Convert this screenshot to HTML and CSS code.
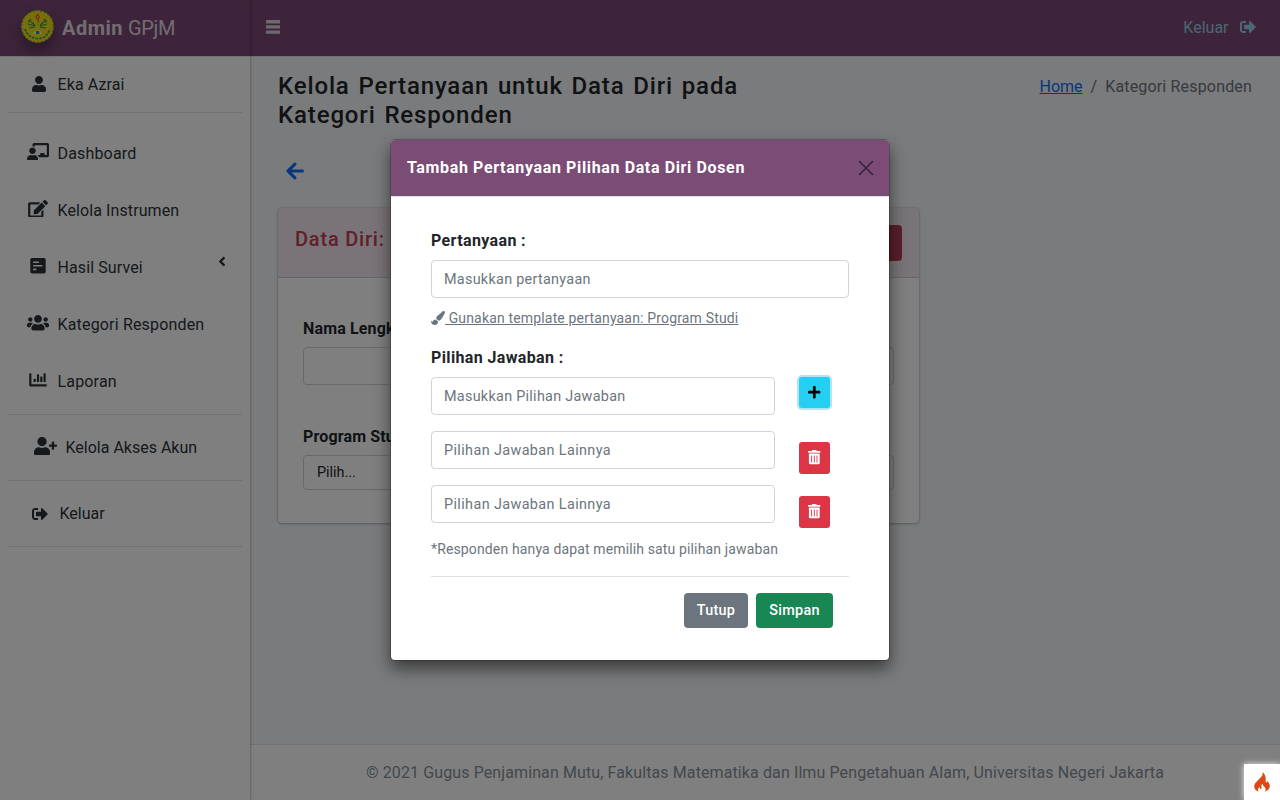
FILE: index.html
```html
<!DOCTYPE html>
<html lang="id">
<head>
<meta charset="utf-8">
<title>Admin GPjM</title>
<link rel="stylesheet" href="styles.css">
</head>
<body>
<svg class="defs" width="0" height="0">
  <symbol id="user" viewBox="0 0 448 512"><path d="M224 256c70.7 0 128-57.3 128-128S294.7 0 224 0 96 57.3 96 128s57.3 128 128 128zm89.6 32h-16.7c-22.2 10.2-46.9 16-72.9 16s-50.6-5.8-72.9-16h-16.7C60.2 288 0 348.2 0 422.4V464c0 26.5 21.5 48 48 48h352c26.5 0 48-21.5 48-48v-41.6c0-74.2-60.2-134.4-134.4-134.4z"/></symbol>
  <symbol id="teacher" viewBox="0 0 640 512"><path d="M208 352c-2.39 0-4.78.35-7.06 1.09C187.98 357.3 174.35 360 160 360c-14.35 0-27.98-2.7-40.95-6.91-2.28-.74-4.66-1.09-7.05-1.09C49.94 352-.33 402.48 0 464.62.14 490.88 21.73 512 48 512h224c26.27 0 47.86-21.12 48-47.38.33-62.14-49.94-112.62-112-112.62zm-48-32c53.02 0 96-42.98 96-96s-42.98-96-96-96-96 42.98-96 96 42.98 96 96 96zM592 0H208c-26.47 0-48 22.25-48 49.59V96c23.42 0 45.1 6.78 64 17.8V64h352v288h-64v-64H384v64h-76.24c19.1 16.69 33.12 38.73 39.69 64H592c26.47 0 48-22.25 48-49.59V49.59C640 22.25 618.47 0 592 0z"/></symbol>
  <symbol id="edit" viewBox="0 0 576 512"><path d="M402.6 83.2l90.2 90.2c3.8 3.8 3.8 10 0 13.8L274.4 405.6l-92.8 10.3c-12.4 1.4-22.9-9.1-21.5-21.5l10.3-92.8L388.8 83.2c3.8-3.8 10-3.8 13.8 0zm162-22.9l-48.8-48.8c-15.2-15.2-39.9-15.2-55.2 0l-35.4 35.4c-3.8 3.8-3.8 10 0 13.8l90.2 90.2c3.8 3.8 10 3.8 13.8 0l35.4-35.4c15.2-15.3 15.2-40 0-55.2zM384 346.2V448H64V128h229.8c3.2 0 6.2-1.3 8.5-3.5l40-40c7.6-7.6 2.2-20.5-8.5-20.5H48C21.5 64 0 85.5 0 112v352c0 26.5 21.5 48 48 48h352c26.5 0 48-21.5 48-48V306.2c0-10.7-12.9-16-20.5-8.5l-40 40c-2.2 2.3-3.5 5.3-3.5 8.5z"/></symbol>
  <symbol id="poll" viewBox="0 0 448 512"><path fill-rule="evenodd" d="M48 32h352a48 48 0 0 1 48 48v352a48 48 0 0 1-48 48H48a48 48 0 0 1-48-48V80a48 48 0 0 1 48-48zM96 128h144a16 16 0 0 1 16 16v16a16 16 0 0 1-16 16H96a16 16 0 0 1-16-16v-16a16 16 0 0 1 16-16zM96 232h240a16 16 0 0 1 16 16v16a16 16 0 0 1-16 16H96a16 16 0 0 1-16-16v-16a16 16 0 0 1 16-16zM96 336h64a16 16 0 0 1 16 16v16a16 16 0 0 1-16 16H96a16 16 0 0 1-16-16v-16a16 16 0 0 1 16-16z"/></symbol>
  <symbol id="users" viewBox="0 0 640 512"><path d="M96 224c35.3 0 64-28.7 64-64s-28.7-64-64-64-64 28.7-64 64 28.7 64 64 64zm448 0c35.3 0 64-28.7 64-64s-28.7-64-64-64-64 28.7-64 64 28.7 64 64 64zm32 32h-64c-17.6 0-33.5 7.1-45.1 18.6 40.3 22.1 68.9 62 75.1 109.4h66c17.7 0 32-14.3 32-32v-32c0-35.3-28.7-64-64-64zm-256 0c61.9 0 112-50.1 112-112S381.9 32 320 32 208 82.1 208 144s50.1 112 112 112zm76.8 32h-8.3c-20.8 10-43.9 16-68.5 16s-47.6-6-68.5-16h-8.3C179.6 288 128 339.6 128 403.2V432c0 26.5 21.5 48 48 48h288c26.5 0 48-21.5 48-48v-28.8c0-63.6-51.6-115.2-115.2-115.2zm-223.7-13.4C161.5 263.1 145.6 256 128 256H64c-35.3 0-64 28.7-64 64v32c0 17.7 14.3 32 32 32h65.9c6.3-47.4 34.9-87.3 75.2-109.4z"/></symbol>
  <symbol id="chart" viewBox="0 0 512 512"><path d="M332.8 320h38.4c6.4 0 12.8-6.4 12.8-12.8V172.8c0-6.4-6.4-12.8-12.8-12.8h-38.4c-6.4 0-12.8 6.4-12.8 12.8v134.4c0 6.4 6.4 12.8 12.8 12.8zm96 0h38.4c6.4 0 12.8-6.4 12.8-12.8V76.8c0-6.4-6.4-12.8-12.8-12.8h-38.4c-6.4 0-12.8 6.4-12.8 12.8v230.4c0 6.4 6.4 12.8 12.8 12.8zm-288 0h38.4c6.4 0 12.8-6.4 12.8-12.8v-70.4c0-6.4-6.4-12.8-12.8-12.8h-38.4c-6.4 0-12.8 6.4-12.8 12.8v70.4c0 6.4 6.4 12.8 12.8 12.8zm96 0h38.4c6.4 0 12.8-6.4 12.8-12.8V108.8c0-6.4-6.4-12.8-12.8-12.8h-38.4c-6.4 0-12.8 6.4-12.8 12.8v198.4c0 6.4 6.4 12.8 12.8 12.8zM496 384H64V80c0-8.84-7.16-16-16-16H16C7.16 64 0 71.16 0 80v336c0 17.67 14.33 32 32 32h464c8.84 0 16-7.16 16-16v-32c0-8.84-7.16-16-16-16z"/></symbol>
  <symbol id="user-plus" viewBox="0 0 640 512"><path d="M624 208h-64v-64c0-8.8-7.2-16-16-16h-32c-8.8 0-16 7.2-16 16v64h-64c-8.8 0-16 7.2-16 16v32c0 8.8 7.2 16 16 16h64v64c0 8.8 7.2 16 16 16h32c8.8 0 16-7.2 16-16v-64h64c8.8 0 16-7.2 16-16v-32c0-8.8-7.2-16-16-16z"/><use href="#user" width="448" height="512"/></symbol>
  <symbol id="sign-out" viewBox="0 0 512 512"><path d="M497 273L329 441c-15 15-41 4.5-41-17v-96H152c-13.3 0-24-10.7-24-24v-96c0-13.3 10.7-24 24-24h136V88c0-21.4 25.9-32 41-17l168 168c9.3 9.4 9.3 24.6 0 34zM192 436v-40c0-6.6-5.4-12-12-12H96c-17.7 0-32-14.3-32-32V160c0-17.7 14.3-32 32-32h84c6.6 0 12-5.4 12-12V76c0-6.6-5.4-12-12-12H96c-53 0-96 43-96 96v192c0 53 43 96 96 96h84c6.6 0 12-5.4 12-12z"/></symbol>
  <symbol id="angle-left" viewBox="0 0 256 512"><path d="M31.7 239l136-136c9.4-9.4 24.6-9.4 33.9 0l22.6 22.6c9.4 9.4 9.4 24.6 0 33.9L127.9 256l96.4 96.4c9.4 9.4 9.4 24.6 0 33.9L201.7 409c-9.4 9.4-24.6 9.4-33.9 0l-136-136c-9.5-9.4-9.5-24.6-.1-34z"/></symbol>
  <symbol id="arrow-left" viewBox="0 0 448 512"><path d="M257.5 445.1l-22.2 22.2c-9.4 9.4-24.6 9.4-33.9 0L7 273c-9.4-9.4-9.4-24.6 0-33.9L201.4 44.7c9.4-9.4 24.6-9.4 33.9 0l22.2 22.2c9.5 9.5 9.3 25-.4 34.3L136.6 216H424c13.3 0 24 10.7 24 24v32c0 13.3-10.7 24-24 24H136.6l120.5 114.8c9.8 9.3 10 24.8.4 34.3z"/></symbol>
  <symbol id="bars" viewBox="0 0 14 14"><path d="M.4 0h13.200a.4.4 0 0 1 .4.4v2.600a.4.4 0 0 1-.4.4H.4A.4.4 0 0 1 0 3V.4A.4.4 0 0 1 .4 0zM.4 5.200h13.200a.4.4 0 0 1 .4.4v2.600a.4.4 0 0 1-.4.4H.4a.4.4 0 0 1-.4-.4V5.600a.4.4 0 0 1 .4-.4zM.4 10.400h13.200a.4.4 0 0 1 .4.4v2.600a.4.4 0 0 1-.4.4H.4a.4.4 0 0 1-.4-.4v-2.600a.4.4 0 0 1 .4-.4z"/></symbol>
  <symbol id="plus" viewBox="0 0 448 512"><path d="M416 208H272V64c0-17.700-14.300-32-32-32h-32c-17.700 0-32 14.300-32 32v144H32c-17.700 0-32 14.300-32 32v32c0 17.700 14.300 32 32 32h144v144c0 17.700 14.300 32 32 32h32c17.700 0 32-14.300 32-32V304h144c17.700 0 32-14.300 32-32v-32c0-17.700-14.300-32-32-32z"/></symbol>
  <symbol id="brush" viewBox="0 0 512 512"><path d="M167.020 309.340c-40.120 2.580-76.530 17.860-97.190 72.300-2.350 6.210-8 9.980-14.590 9.980-11.110 0-45.460-27.670-55.250-34.350C0 439.620 37.930 512 128 512c75.860 0 128-43.770 128-120.190 0-3.110-.65-6.080-.97-9.130l-88.010-73.340zM457.890 0c-15.160 0-29.370 6.710-40.210 16.450C213.270 199.050 192 203.340 192 257.090c0 13.700 3.250 26.760 8.730 38.700l63.820 53.180c7.210 1.800 14.640 3.030 22.390 3.030 62.110 0 98.110-45.470 211.160-256.460 7.380-14.350 13.900-29.850 13.900-45.990C512 20.640 486 0 457.890 0z"/></symbol>
  <symbol id="trash" viewBox="0 0 448 512"><path fill-rule="evenodd" d="M32 464a48 48 0 0 0 48 48h288a48 48 0 0 0 48-48V128H32zm272-256a16 16 0 0 1 32 0v224a16 16 0 0 1-32 0zm-96 0a16 16 0 0 1 32 0v224a16 16 0 0 1-32 0zm-96 0a16 16 0 0 1 32 0v224a16 16 0 0 1-32 0zM432 32H312l-9.400-18.700A24 24 0 0 0 281.100 0H166.800a23.720 23.720 0 0 0-21.400 13.300L136 32H16A16 16 0 0 0 0 48v32a16 16 0 0 0 16 16h416a16 16 0 0 0 16-16V48a16 16 0 0 0-16-16z"/></symbol>
</svg>

<div class="app">
  <aside class="sidebar">
    <div class="brand">
      <svg class="logo" viewBox="0 0 33 33">
        <circle cx="16.500" cy="16.500" r="16.300" fill="#f0dc18"/>
        <circle cx="16.500" cy="16.500" r="15.600" fill="none" stroke="#2f9a55" stroke-width="1" stroke-dasharray="1.600 2.200"/>
        <path d="M4 19c2 6 6 9 12.500 9.500S27 25 29 19" fill="none" stroke="#2f9a55" stroke-width="1.700" stroke-dasharray="2.500 1.200"/>
        <path d="M9 11l5 4M7 14l7 2M8 18l6-1M24 11l-5 4M26 14l-7 2M25 18l-6-1M10 9l-3 3M23 9l3 3" stroke="#2f9a55" stroke-width="1.200"/>
        <path d="M16.500 4l2 3-2 2 1.500 2-1.500 1.500M16.500 4l-1.500 3 1.500 2" fill="none" stroke="#e02f20" stroke-width="1"/>
        <path d="M12 24l2.500-3.500h4L21 24z" fill="#fff"/><path d="M14.800 21h3.600v3h-3.600z" fill="#2f9a55"/>
      </svg>
      <span class="brand-name"><b>Admin</b> <span class="thin">GPjM</span></span>
    </div>
    <div class="user-panel"><svg class="i14"><use href="#user"/></svg><span class="ls1">Eka Azrai</span></div>
    <nav class="menu">
      <a class="item"><svg class="i22"><use href="#teacher"/></svg><span class="ls2">Dashboard</span></a>
      <a class="item"><svg class="i22"><use href="#edit"/></svg><span class="ls1">Kelola Instrumen</span></a>
      <a class="item"><svg class="i22"><use href="#poll"/></svg><span class="ls1">Hasil Survei</span><svg class="caret"><use href="#angle-left"/></svg></a>
      <a class="item"><svg class="i22"><use href="#users"/></svg><span class="ls2">Kategori Responden</span></a>
      <a class="item"><svg class="i22"><use href="#chart"/></svg><span class="ls2">Laporan</span></a>
    </nav>
    <div class="block"><svg class="plus-ic"><use href="#user-plus"/></svg><span>Kelola Akses Akun</span></div>
    <div class="block out"><svg class="i16"><use href="#sign-out"/></svg><span>Keluar</span></div>
  </aside>

  <div class="main">
    <header class="navbar">
      <svg class="bars"><use href="#bars"/></svg>
      <a class="logout"><span>Keluar</span><svg class="i16"><use href="#sign-out"/></svg></a>
    </header>
    <main class="content">
      <div class="page-head">
        <h1>Kelola Pertanyaan untuk Data Diri pada<br>Kategori Responden</h1>
        <div class="crumbs"><a>Home</a><i>/</i><span class="ls2">Kategori Responden</span></div>
      </div>
      <svg class="back"><use href="#arrow-left"/></svg>
      <section class="card">
        <div class="card-head"><h2>Data Diri:</h2><span class="add"></span></div>
        <div class="card-body">
          <b class="label">Nama Lengkap</b>
          <div class="field"></div>
          <b class="label second">Program Studi</b>
          <div class="field select">Pilih...</div>
        </div>
      </section>
    </main>
    <footer class="footer">© 2021 Gugus Penjaminan Mutu, Fakultas Matematika dan Ilmu Pengetahuan Alam, Universitas Negeri Jakarta</footer>
  </div>
</div>

<div class="backdrop">
  <div class="modal">
    <div class="modal-head"><b>Tambah Pertanyaan Pilihan Data Diri Dosen</b>
      <svg class="close" viewBox="0 0 16 16"><path d="M1.500 1.500l13 13M14.500 1.500l-13 13" stroke="#000" stroke-width="1.500" stroke-linecap="round"/></svg></div>
    <div class="modal-body">
      <b class="label">Pertanyaan :</b>
      <div class="input">Masukkan pertanyaan</div>
      <div class="template"><svg class="brush"><use href="#brush"/></svg><u>&nbsp;Gunakan template pertanyaan: Program Studi</u></div>
      <b class="label">Pilihan Jawaban :</b>
      <div class="option"><div class="input">Masukkan Pilihan Jawaban</div><span class="sq plus"><svg><use href="#plus"/></svg></span></div>
      <div class="option"><div class="input other">Pilihan Jawaban Lainnya</div><span class="sq del"><svg><use href="#trash"/></svg></span></div>
      <div class="option"><div class="input other">Pilihan Jawaban Lainnya</div><span class="sq del"><svg><use href="#trash"/></svg></span></div>
      <div class="note">*Responden hanya dapat memilih satu pilihan jawaban</div>
      <div class="actions"><span class="btn gray">Tutup</span><span class="btn green">Simpan</span></div>
    </div>
  </div>
</div>

<div class="debug"><svg viewBox="0 0 16 20"><path d="M8.500 0c.8 3-1 4.600-3 6.800C3.200 9.200.2 11.500.2 14.500c0 2.500 1.800 4.300 4.500 5.200-1.200-1.500-.8-3.600.8-4.800 0 1.200.5 1.800 1.200 1.800.9 0 1.100-.9.8-1.800-.5-1.500.1-2.500 1.200-3.200-.2 2.600 3.300 3.200 3 5.800-.1 1-.6 1.700-1.200 2.200 2.900-.7 5.300-2.600 5.300-5.600 0-2.400-1.300-3.700-2.500-5.200-.1 1-.7 1.600-1.400 1.600C11.200 7.600 12.800 3.600 8.500 0z" fill="#dd4814"/></svg></div>
</body>
</html>
```
FILE: styles.css
```css
* { box-sizing: border-box; }
body { margin: 0; font: 16px/24px Roboto, "Open Sans", sans-serif; color: #212529; }
svg { fill: currentColor; display: block; flex: none; }
.defs { position: absolute; }
.ls1 { letter-spacing: .1px; }
.ls2 { letter-spacing: .17px; }

.app { display: flex; width: 1280px; height: 800px; overflow: hidden; }
.sidebar { width: 250px; flex: none; background: #fff; color: #2c3238; position: relative; z-index: 1; box-shadow: 0 0 3px rgba(0,0,0,.4); }
.brand { height: 57px; background: #7a4874; border-bottom: 1px solid #dee2e6; display: flex; align-items: center; padding-left: 21px; }
.logo { width: 33px; height: 33px; margin: -3px 8px 0 0; border-radius: 50%; box-shadow: 0 7px 14px rgba(0,0,0,.35); }
.brand-name { font-size: 20px; color: #e3dbe2; display: flex; gap: 5px; }
.brand-name b { font-weight: 700; letter-spacing: .5px; }
.thin { font-weight: 400; letter-spacing: -.35px; }
.user-panel { margin: 0 8px; height: 56px; border-bottom: 1px solid #dee2e6; display: flex; align-items: center; padding-left: 24px; gap: 11.500px; }
.user-panel svg { margin-top: -1px; }
.i14 { width: 14px; height: 16px; }
.i16 { width: 16px; height: 16px; }
.i22 { width: 22px; height: 17.600px; margin-top: -4px; }
.menu { margin: 12px 8px 4px; }
.item { display: flex; align-items: center; height: 57px; padding: 0 16px 0 19px; gap: 8.500px; }
.caret { width: 8px; height: 15px; margin: -12px 0 0 auto; }
.block { margin: 0 8px; height: 66px; border-top: 1px solid #dee2e6; display: flex; align-items: center; padding-left: 25.500px; gap: 10px; }
.plus-ic { width: 23px; height: 18.400px; margin: -3px -1px 0 0; }
.out { border-bottom: 1px solid #dee2e6; height: 67px; padding-left: 24px; gap: 11.500px; }

.main { flex: 1; display: flex; flex-direction: column; background: #f4f6f9; min-width: 0; }
.navbar { height: 57px; background: #7a4874; border-bottom: 1px solid #dee2e6; display: flex; align-items: center; justify-content: space-between; padding: 0 24px 0 16px; }
.bars { width: 14px; height: 14px; color: #dcd3db; margin-top: -2px; }
.logout { display: flex; align-items: center; gap: 11.500px; color: #98cee6; }
.logout svg { margin-top: -2px; }
.content { flex: 1; padding: 15px 28px 0; }
.page-head { display: flex; justify-content: space-between; }
h1 { margin: 0; font: 500 24px/28.800px Roboto, sans-serif; letter-spacing: .86px; word-spacing: 1.900px; white-space: nowrap; }
.crumbs { display: flex; gap: 8px; margin-top: 3px; color: #6c757d; white-space: nowrap; }
.crumbs a { color: #0d6efd; text-decoration: underline; }
.crumbs i { font-style: normal; }
.back { width: 18px; height: 20px; margin: 31px 0 27px 8px; color: #0d6efd; }

.card { width: 641px; height: 315px; background: #fff; border-radius: 4px; box-shadow: 0 0 2px rgba(0,0,0,.25), 0 1px 3px rgba(0,0,0,.2); overflow: hidden; }
.card-head { height: 70px; background: #f0e8ee; border-bottom: 1px solid #cfcfcf; display: flex; justify-content: space-between; padding: 17px 17px 0; }
h2 { margin: 2px 0 0; font: 500 20px/24px Roboto, sans-serif; letter-spacing: .8px; color: #c63c57; }
.add { width: 100px; height: 36px; background: #b13e56; border-radius: 4px; }
.card-body { padding: 39px 25px; }
.label { display: block; font-weight: 700; line-height: 24px; letter-spacing: .37px; }
.card .label { letter-spacing: .15px; }
.field { height: 38px; margin-top: 6px; border: 1px solid #ced4da; border-radius: 4px; }
.second { margin-top: 40px; }
.select { height: 35px; padding-left: 13px; font-size: 14.400px; line-height: 33px; }
.footer { height: 56px; background: #fff; border-top: 1px solid #dee2e6; color: #869099; display: flex; align-items: center; justify-content: center; white-space: nowrap; padding-top: 1px; letter-spacing: .107px; }

.backdrop { position: absolute; inset: 0 auto auto 0; width: 1280px; height: 800px; background: rgba(0,0,0,.5); z-index: 5; display: flex; justify-content: center; align-items: flex-start; padding-top: 139px; }
.modal { width: 500px; height: 522px; border: 1px solid rgba(0,0,0,.2); border-radius: 5px; background: #fff; background-clip: padding-box; box-shadow: 0 8px 16px rgba(0,0,0,.5); }
.modal-head { height: 57px; background: #7a4c76; color: #fff; border-bottom: 1px solid #dee2e6; border-radius: 4px 4px 0 0; display: flex; align-items: center; justify-content: space-between; padding: 0 15px 0 16px; white-space: nowrap; letter-spacing: .632px; }
.close { width: 16px; height: 16px; opacity: .55; }
.modal-body { padding: 32px 40px 0; white-space: nowrap; }
.input { height: 38px; border: 1px solid #ced4da; border-radius: 4px; padding: 1px 0 0 12px; font-size: 14.400px; line-height: 36px; letter-spacing: .28px; color: #6c757d; }
.other { letter-spacing: .383px; }
.modal .label + * { margin-top: 7px; }
.template { font-size: 14px; line-height: 24px; letter-spacing: .165px; color: #6c757d; display: flex; align-items: center; margin: 8px 0 16px; }
.brush { width: 14px; height: 14px; }
.option { display: flex; margin-bottom: 16px; }
.option .input { width: 344px; margin-right: 24px; }
.sq { width: 31px; height: 32px; border-radius: 3px; display: flex; align-items: center; justify-content: center; }
.sq svg { width: 12.600px; height: 14.400px; margin-top: -1px; }
.plus { height: 31px; background: #25cff2; color: #000; box-shadow: 0 0 0 2px #b0e6f2; }
.del { background: #dc3545; color: #fff; margin-top: 11px; margin-bottom: -5px; }
.note { font-size: 14px; line-height: 21px; letter-spacing: .137px; color: #6c757d; border-bottom: 1px solid #dee2e6; height: 38px; }
.actions { display: flex; justify-content: flex-end; gap: 8px; padding: 16px 16px 0 0; }
.btn { height: 35px; border-radius: 4px; color: #fff; font-size: 14.400px; font-weight: 500; line-height: 35px; letter-spacing: .28px; text-align: center; }
.gray { width: 64px; background: #6c757d; }
.green { width: 77px; background: #198754; }

.debug { position: absolute; left: 1244px; top: 764px; width: 36px; height: 36px; background: #fff; z-index: 6; box-shadow: 0 0 6px #eee; display: flex; align-items: center; justify-content: center; }
.debug svg { width: 16px; height: 20px; }
```
